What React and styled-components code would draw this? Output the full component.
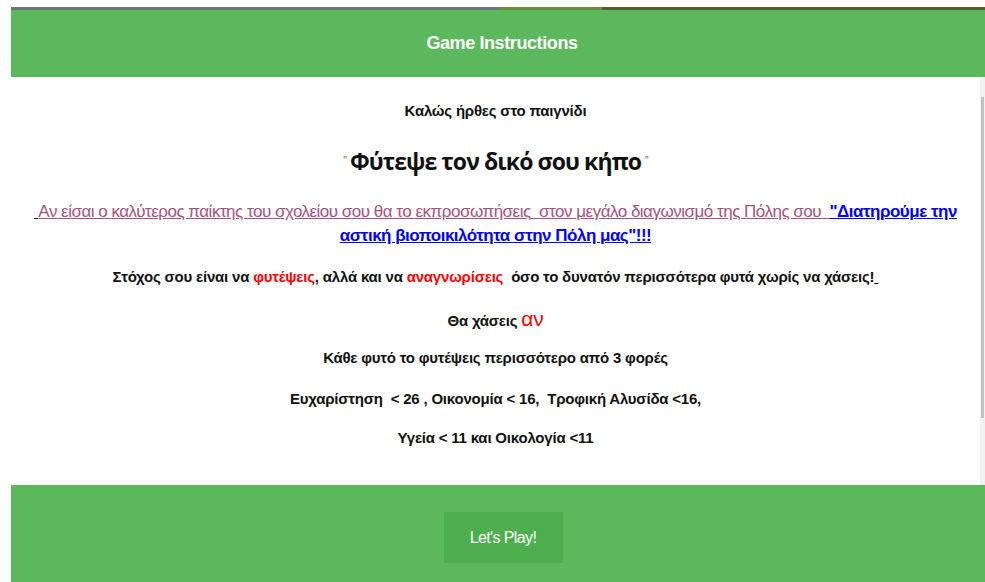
import React from "react";
import styled, { createGlobalStyle } from "styled-components";

const GlobalStyle = createGlobalStyle`
  html, body {
    margin: 0;
    padding: 0;
    background: #ffffff;
    overflow: hidden;
  }
  body {
    font-family: "Liberation Sans", Arial, sans-serif;
  }
`;

/* thin strip of the game toolbar peeking out above the dialog */
const GameBar = styled.div`
  display: flex;
  height: 3px;
  margin: 7px 0 0 11px;
`;

const BarPart = styled.div`
  background: ${(p) => p.color};
  width: ${(p) => (p.grow ? "auto" : `${p.w}px`)};
  flex: ${(p) => (p.grow ? 1 : "none")};
`;

const Dialog = styled.div`
  margin-left: 11px;
  width: 974px;
  display: flex;
  flex-direction: column;
`;

const Header = styled.div`
  background: #5cb85c;
  height: 67px;
  display: flex;
  align-items: center;
  justify-content: center;
  padding-left: 8px;
  color: #ffffff;
  font-size: 18px;
  font-weight: bold;
  letter-spacing: -0.4px;
`;

const Body = styled.div`
  height: 408px;
  overflow: hidden;
  display: flex;
  background: #ffffff;
`;

const Content = styled.div`
  flex: 1;
  padding: 24px 10px 0;
  text-align: center;
  color: #111111;
`;

/* the dialog body's own scrollbar */
const ScrollTrack = styled.div`
  width: 5px;
  background: #f1f1f1;
  padding-top: 20px;
  display: flex;
  flex-direction: column;
`;

const ScrollThumb = styled.div`
  height: 321px;
  margin: 0 1px;
  background: #c1c1c1;
`;

const Para = styled.p`
  margin: ${(p) => p.top || 0}px 0 0;
  font-size: ${(p) => p.size || 15}px;
  line-height: ${(p) => p.lh || 20}px;
  font-weight: ${(p) => (p.bold ? "bold" : "normal")};
  letter-spacing: ${(p) => p.ls || 0}px;
`;

const Title = styled.h2`
  margin: 25px 0 0;
  font-family: "Open Sans", "Noto Sans", sans-serif;
  font-weight: 700;
  font-size: 23px;
  line-height: 30px;
  letter-spacing: -0.9px;
  color: #111111;
`;

const Quote = styled.span`
  font-family: "Liberation Sans", Arial, sans-serif;
  font-size: 10px;
  font-weight: normal;
  color: #666666;
  vertical-align: 6px;
  margin: 0 4px;
`;

const Mauve = styled.span`
  color: #a5527d;
  text-decoration: underline;
`;

const Plain = styled.span`
  text-decoration: underline;
  color: #111111;
`;

const Link = styled.a`
  color: #0000ff;
  font-weight: bold;
  text-decoration: underline;
`;

const Red = styled.span`
  color: #ff0000;
  font-size: ${(p) => p.size || "inherit"};
  font-weight: ${(p) => (p.light ? "normal" : "inherit")};
`;

const Footer = styled.div`
  background: #5cb85c;
  display: flex;
  justify-content: center;
  padding: 27px 0 20px 10px;
`;

const PlayButton = styled.button`
  background: #4cae4c;
  border: none;
  color: #ffffff;
  font-family: "Liberation Sans", Arial, sans-serif;
  font-size: 16px;
  letter-spacing: -0.6px;
  width: 119px;
  height: 51px;
  cursor: pointer;
`;

export default function App() {
  return (
    <>
      <GlobalStyle />
      <GameBar>
        <BarPart color="#6c747c" w={489} />
        <BarPart color="#6e8a3c" w={102} />
        <BarPart color="#5a5a2c" grow />
      </GameBar>
      <Dialog>
        <Header>Game Instructions</Header>
        <Body>
          <Content>
            <Para bold ls={-0.2}>Καλώς ήρθες στο παιγνίδι</Para>
            <Title>
              <Quote>"</Quote>Φύτεψε τον δικό σου κήπο<Quote>"</Quote>
            </Title>
            <Para size={17} lh={24} top={24} ls={-0.5}>
              <Plain>{"\u00a0"}</Plain>
              <Mauve>
                Αν είσαι ο καλύτερος παίκτης του σχολείου σου θα το εκπροσωπήσεις{"\u00a0 "}στον
                μεγάλο διαγωνισμό της Πόλης σου{"\u00a0 "}
              </Mauve>
              <Link href="#">"Διατηρούμε την αστική βιοποικιλότητα στην Πόλη μας"!!!</Link>
            </Para>
            <Para bold top={19} ls={-0.2}>
              Στόχος σου είναι να <Red>φυτέψεις</Red>, αλλά και να <Red>αναγνωρίσεις</Red>
              {"\u00a0 "}όσο το δυνατόν περισσότερα φυτά χωρίς να χάσεις!<Plain>{"\u00a0"}</Plain>
            </Para>
            <Para bold top={20} lh={24} ls={-0.2}>
              Θα χάσεις <Red size="21px" light>αν</Red>
            </Para>
            <Para bold top={15} ls={-0.2}>Κάθε φυτό το φυτέψεις περισσότερο από 3 φορές</Para>
            <Para bold top={21} ls={-0.2}>
              Ευχαρίστηση{"\u00a0 "}&lt; 26 , Οικονομία &lt; 16,{"\u00a0 "}Τροφική Αλυσίδα &lt;16,
            </Para>
            <Para bold top={19} ls={-0.2}>Υγεία &lt; 11 και Οικολογία &lt;11</Para>
          </Content>
          <ScrollTrack>
            <ScrollThumb />
          </ScrollTrack>
        </Body>
        <Footer>
          <PlayButton>Let's Play!</PlayButton>
        </Footer>
      </Dialog>
    </>
  );
}
